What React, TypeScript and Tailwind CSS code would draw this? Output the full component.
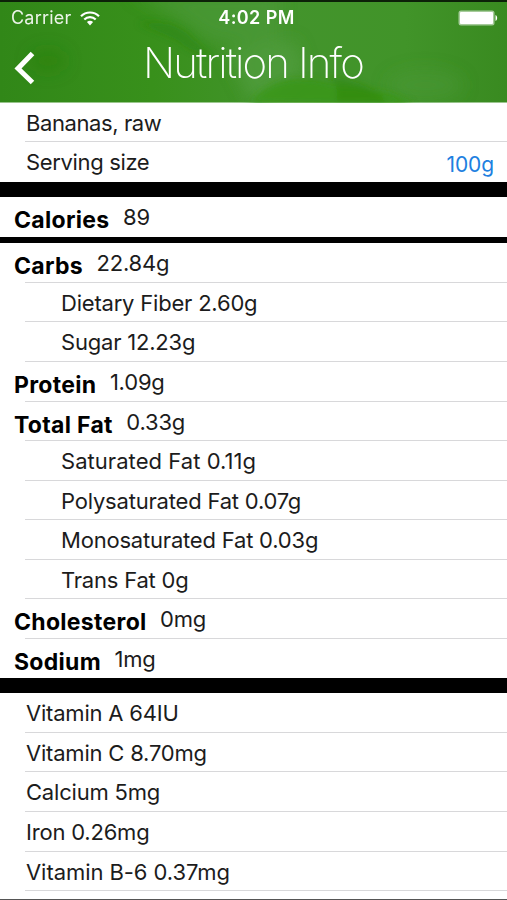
import cx from 'clsx';

type Row = {
  label: string;
  value?: string;
  kind: 'plain' | 'nested' | 'bold' | 'serving';
  tracking?: string;
};

const SERVING: Row[] = [
  { label: 'Bananas, raw', kind: 'plain', tracking: 'tracking-[-0.4px]' },
  { label: 'Serving size', value: '100g', kind: 'serving', tracking: 'tracking-[-0.35px]' },
];

const CALORIES: Row[] = [{ label: 'Calories', value: '89', kind: 'bold' }];

const NUTRIENTS: Row[] = [
  { label: 'Carbs', value: '22.84g', kind: 'bold' },
  { label: 'Dietary Fiber 2.60g', kind: 'nested' },
  { label: 'Sugar 12.23g', kind: 'nested' },
  { label: 'Protein', value: '1.09g', kind: 'bold' },
  { label: 'Total Fat', value: '0.33g', kind: 'bold' },
  { label: 'Saturated Fat 0.11g', kind: 'nested', tracking: 'tracking-[0.05px]' },
  { label: 'Polysaturated Fat 0.07g', kind: 'nested' },
  { label: 'Monosaturated Fat 0.03g', kind: 'nested' },
  { label: 'Trans Fat 0g', kind: 'nested' },
  { label: 'Cholesterol', value: '0mg', kind: 'bold' },
  { label: 'Sodium', value: '1mg', kind: 'bold' },
];

const VITAMINS: Row[] = [
  { label: 'Vitamin A 64IU', kind: 'plain' },
  { label: 'Vitamin C 8.70mg', kind: 'plain' },
  { label: 'Calcium 5mg', kind: 'plain' },
  { label: 'Iron 0.26mg', kind: 'plain' },
  { label: 'Vitamin B-6 0.37mg', kind: 'plain', tracking: 'tracking-[-0.06px]' },
];

const Backdrop = () => (
  <svg className="absolute inset-0 h-full w-full" viewBox="0 0 507 103" preserveAspectRatio="none" aria-hidden="true">
    <defs>
      <linearGradient id="leaf" x1="0" y1="0" x2="1" y2="0">
        <stop offset="0" stopColor="#318718" />
        <stop offset="0.3" stopColor="#38901b" />
        <stop offset="0.55" stopColor="#43942c" />
        <stop offset="0.8" stopColor="#419429" />
        <stop offset="1" stopColor="#398a20" />
      </linearGradient>
      <filter id="soft" x="-50%" y="-50%" width="200%" height="200%">
        <feGaussianBlur stdDeviation="8" />
      </filter>
      <filter id="edge" x="-20%" y="-50%" width="140%" height="200%">
        <feGaussianBlur stdDeviation="3" />
      </filter>
    </defs>
    <rect width="507" height="103" fill="url(#leaf)" />
    <g filter="url(#soft)">
      <path d="M130-10h150v60l-70-10-30-22z" fill="#4d993b" opacity=".65" />
      <path d="M225 50l70-10 10 30-50 40z" fill="#519e3f" opacity=".7" />
      <ellipse cx="48" cy="60" rx="18" ry="12" fill="#277e0c" opacity=".4" />
      <ellipse cx="425" cy="85" rx="38" ry="16" fill="#4b9836" opacity=".5" />
    </g>
    <g filter="url(#edge)">
      <path d="M138 22q34-6 52 12t24 20q-22 0-36-14z" fill="#2d8610" opacity=".5" />
      <path d="M250 103q20-24 48-24t40 8q46 0 76 18z" fill="#3b961a" opacity=".85" />
      <path d="M326 75q14 6 10 28h50q-12-20-60-28z" fill="#2f880f" opacity=".65" />
    </g>
  </svg>
);

const StatusBar = () => (
  <div className="flex h-8 items-center justify-between pl-[11px] pr-[9px]">
    <div className="flex w-[120px] items-center gap-[9px]">
      <span className="text-[18px] leading-none tracking-[0.2px] text-white/90">Carrier</span>
      <svg className="h-[15px] w-5" viewBox="0 0 20 15" fill="none" stroke="#fff" strokeWidth="2.2" aria-hidden="true">
        <path d="M1 5.2a12.8 12.8 0 0 1 18 0" />
        <path d="M4.3 8.5a8.1 8.1 0 0 1 11.4 0" />
        <path d="M10 14.5l-3.1-3.4a4.5 4.5 0 0 1 6.2 0z" fill="#fff" stroke="none" />
      </svg>
    </div>
    <span className="pl-1 text-[18px] font-semibold leading-none tracking-[0.4px] text-white">4:02 PM</span>
    <div className="flex w-[120px] items-center justify-end">
      <svg className="h-4 w-10" viewBox="0 0 40 16" aria-hidden="true">
        <rect x=".5" y=".5" width="36" height="15" rx="2.5" fill="#fff" fillOpacity=".55" />
        <rect x="2" y="2" width="33" height="12" rx="1" fill="#fff" />
        <path d="M37.5 5c2.2.8 2.2 5.2 0 6z" fill="#fff" />
      </svg>
    </div>
  </div>
);

const Header = () => (
  <header className="relative h-[102.5px] shrink-0 overflow-hidden border-t-2 border-[#0c2108]">
    <Backdrop />
    <div className="relative">
      <StatusBar />
      <div className="flex h-[58px] items-center">
        <button aria-label="Back" className="w-[45px] pl-[14px] pt-[9px]">
          <svg className="h-[34px] w-[21px]" viewBox="0 0 21 34" fill="none" stroke="#fff" strokeWidth="5" aria-hidden="true">
            <path d="M18.5 2.5L4 17.5l14.5 14" />
          </svg>
        </button>
        <h1 className="flex-1 pr-[46px] text-center text-[42px] font-extralight leading-none tracking-[-1.9px] whitespace-nowrap text-white">
          Nutrition Info
        </h1>
      </div>
    </div>
  </header>
);

const TableRow = ({ row, last }: { row: Row; last: boolean }) => (
  <li className="flex h-[39.55px] flex-col">
    <div
      className={cx(
        'flex flex-1 items-start whitespace-nowrap text-[22px] leading-[26px] text-[#1c1c1c]',
        row.tracking ?? 'tracking-[-0.2px]',
        row.kind === 'nested' && 'pl-[61px]',
        row.kind === 'bold' && 'pl-[14px]',
        (row.kind === 'plain' || row.kind === 'serving') && 'pl-[26px]'
      )}
    >
      {row.kind === 'bold' ? (
        <>
          <span className="pt-[10px] text-[23px] font-bold tracking-[0.3px] text-black">{row.label}</span>
          <span className="pl-[13.5px] pt-[7px]">{row.value}</span>
        </>
      ) : (
        <span className="pt-[7px]">{row.label}</span>
      )}
      {row.kind === 'serving' && (
        <span className="ml-auto pr-[13px] pt-[10px] text-[21px] tracking-[-0.1px] text-[#2080e0]">{row.value}</span>
      )}
    </div>
    {!last && <div className="ml-[25px] h-px bg-[#d8d8da]" />}
  </li>
);

const Section = ({ rows }: { rows: Row[] }) => (
  <ul>
    {rows.map((row, index) => (
      <TableRow key={row.label} row={row} last={index === rows.length - 1} />
    ))}
  </ul>
);

const App = () => (
  <main className="flex h-[900px] w-[507px] flex-col overflow-hidden bg-white font-['Inter',sans-serif]">
    <Header />
    <Section rows={SERVING} />
    <div className="h-[15.7px] shrink-0 bg-black" />
    <Section rows={CALORIES} />
    <div className="h-[6.5px] shrink-0 bg-black" />
    <Section rows={NUTRIENTS} />
    <div className="h-[15px] shrink-0 bg-black" />
    <Section rows={VITAMINS} />
    <div className="-mt-px ml-[25px] h-px shrink-0 bg-[#d8d8da]" />
    <div className="mt-auto h-px shrink-0 bg-[#555]" />
  </main>
);

export default App;
